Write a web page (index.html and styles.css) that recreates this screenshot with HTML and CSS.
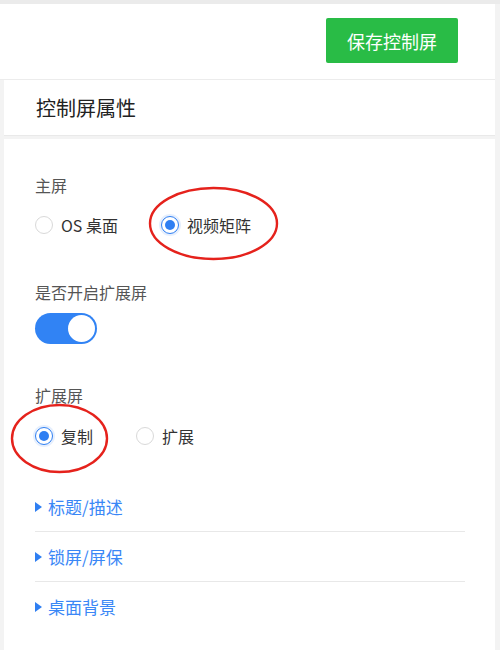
FILE: index.html
```html
<!DOCTYPE html>
<html lang="zh">
<head>
<meta charset="utf-8">
<title>控制屏属性</title>
<link rel="stylesheet" href="styles.css">
</head>
<body>
<header class="toolbar">
  <button class="btn-save">保存控制屏</button>
</header>
<main class="card">
  <div class="card-title">控制屏属性</div>
  <div class="card-body">
    <div class="field">
      <div class="field-label">主屏</div>
      <div class="radio-row">
        <label class="radio"><span class="radio-dot"></span><span class="radio-text">OS 桌面</span></label>
        <label class="radio checked"><span class="radio-dot"></span><span class="radio-text">视频矩阵</span></label>
      </div>
    </div>
    <div class="field">
      <div class="field-label">是否开启扩展屏</div>
      <div class="switch on"><span class="switch-knob"></span></div>
    </div>
    <div class="field">
      <div class="field-label">扩展屏</div>
      <div class="radio-row">
        <label class="radio checked"><span class="radio-dot"></span><span class="radio-text">复制</span></label>
        <label class="radio"><span class="radio-dot"></span><span class="radio-text">扩展</span></label>
      </div>
    </div>
    <ul class="collapse-list">
      <li class="collapse-item"><span class="caret"></span>标题/描述</li>
      <li class="collapse-item"><span class="caret"></span>锁屏/屏保</li>
      <li class="collapse-item"><span class="caret"></span>桌面背景</li>
    </ul>
    <svg class="mark mark-one" width="131" height="75" viewBox="0 0 131 75"><ellipse cx="65.5" cy="37.5" rx="63.5" ry="35.5" fill="none" stroke="#e5221c" stroke-width="2.4"/></svg>
    <svg class="mark mark-two" width="99" height="71" viewBox="0 0 99 71"><ellipse cx="49.5" cy="35.5" rx="47.5" ry="33.5" fill="none" stroke="#e5221c" stroke-width="2.4"/></svg>
  </div>
</main>
</body>
</html>
```

FILE: styles.css
```css
* { box-sizing: border-box; }
html, body { margin: 0; padding: 0; }
body {
  background: #f3f3f3;
  font-family: "Noto Sans CJK SC", "Noto Sans", sans-serif;
  width: 500px;
  height: 650px;
  overflow: hidden;
  border-top: 4px solid #ebebeb;
}
.toolbar {
  width: 495px;
  height: 76px;
  background: #fff;
  display: flex;
  align-items: flex-start;
  justify-content: flex-end;
  padding: 14px 37px 0 0;
  border-bottom: 1px solid #ececec;
}
.btn-save {
  width: 132px;
  height: 45px;
  background: #29bc46;
  color: #fff;
  border: none;
  border-radius: 2px;
  font-family: inherit;
  font-size: 18px;
  padding: 0;
  cursor: pointer;
}
.card {
  margin-left: 4px;
  width: 491px;
}
.card-title {
  height: 56px;
  background: #fff;
  display: flex;
  align-items: center;
  padding-left: 32px;
  font-size: 20px;
  color: #222;
  border-bottom: 1px solid #e9e9e9;
  margin-bottom: 3px;
}
.card-body {
  position: relative;
  background: #fff;
  height: 520px;
  padding: 34px 30px 0 31px;
}
.field + .field { margin-top: 39px; }
.field-label {
  font-size: 16px;
  line-height: 24px;
  color: #555;
}
.radio-row {
  display: flex;
  align-items: center;
  height: 32px;
  margin-top: 12px;
}
.field:last-of-type .radio-row { margin-top: 13px; }
.radio {
  display: flex;
  align-items: center;
  margin-right: 43px;
  cursor: pointer;
}
.radio-dot {
  width: 18px;
  height: 18px;
  border-radius: 50%;
  border: 1px solid #d9d9d9;
  background: #fff;
  position: relative;
  flex: none;
}
.radio.checked .radio-dot {
  border-color: #2f7ff2;
  box-shadow: 0 0 0 2px rgba(47, 127, 242, 0.12);
}
.radio.checked .radio-dot::after {
  content: "";
  position: absolute;
  left: 3px;
  top: 3px;
  width: 10px;
  height: 10px;
  border-radius: 50%;
  background: #2f7ff2;
}
.radio-text {
  margin-left: 8px;
  font-size: 16px;
  color: #333;
  line-height: 24px;
}
.switch {
  margin-top: 9px;
  width: 62px;
  height: 31px;
  border-radius: 16px;
  background: #3183f4;
  display: flex;
  align-items: center;
  justify-content: flex-end;
  padding: 2px;
}
.switch-knob {
  width: 27px;
  height: 27px;
  border-radius: 50%;
  background: #fff;
}
.collapse-list {
  list-style: none;
  margin: 30px 0 0;
  padding: 0;
}
.collapse-item {
  height: 49px;
  display: flex;
  align-items: center;
  font-size: 17px;
  color: #3a87f6;
}
.collapse-item + .collapse-item { border-top: 1px solid #e8e8e8; height: 50px; }
.caret {
  width: 0;
  height: 0;
  border-top: 5px solid transparent;
  border-bottom: 5px solid transparent;
  border-left: 7px solid #2f7ff2;
  margin-right: 6px;
}
.mark { position: absolute; }
.mark-one { left: 144px; top: 47px; }
.mark-two { left: 6px; top: 264px; }
```
